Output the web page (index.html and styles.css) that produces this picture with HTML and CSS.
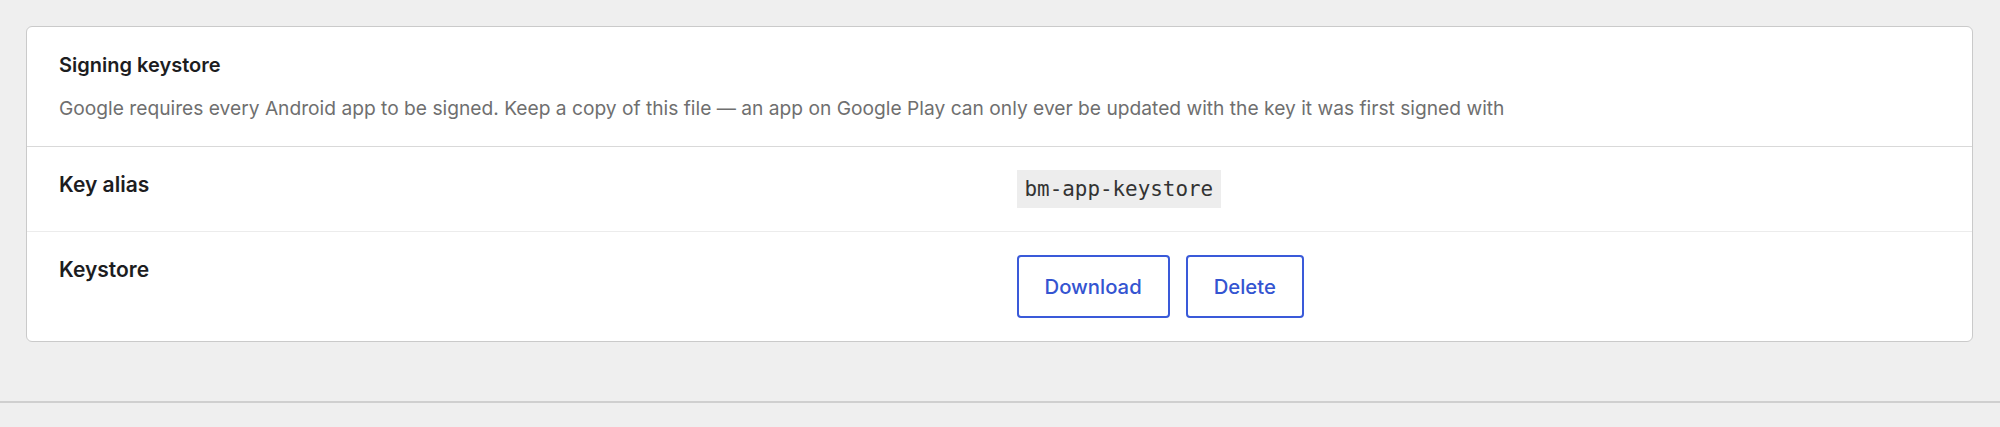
FILE: index.html
```html
<!DOCTYPE html>
<html lang="en">
<head>
    <meta charset="UTF-8">
    <meta name="viewport" content="width=device-width, initial-scale=1.0">
    <title>Signing keystore</title>
    <link rel="stylesheet" href="styles.css">
</head>
<body>
    <div class="page">
        <div class="card">
            <div class="card-header">
                <h2>Signing keystore</h2>
                <p class="hint">Google requires every Android app to be signed. Keep a copy of this file — an app on Google Play can only ever be updated with the key it was first signed with</p>
            </div>
            <div class="row">
                <div class="row-label">Key alias</div>
                <div class="row-value">
                    <code>bm-app-keystore</code>
                </div>
            </div>
            <div class="row">
                <div class="row-label">Keystore</div>
                <div class="row-value actions">
                    <button class="btn-outline">Download</button>
                    <button class="btn-outline">Delete</button>
                </div>
            </div>
        </div>
    </div>
    <div class="page-footer"></div>
</body>
</html>
```

FILE: styles.css
```css
body {
    margin: 0;
    background-color: #efefef;
    font-family: Inter, "Noto Sans", sans-serif;
    color: #1d1d1f;
}
.page {
    padding: 26px 27px 0 26px;
}
.card {
    background-color: #fff;
    border: 1px solid #cacaca;
    border-radius: 6px;
}
.card-header {
    padding: 24px 32px 26px;
    border-bottom: 1px solid #d9d9d9;
}
.card-header h2 {
    margin: 0;
    font-size: 20px;
    line-height: 28px;
    font-weight: 600;
}
.hint {
    margin: 17px 0 0;
    font-size: 19.2px;
    line-height: 24px;
    color: #6f6f6f;
}
.row {
    display: grid;
    grid-template-columns: 1fr 1fr;
    column-gap: 34px;
    padding: 23px 32px;
}
.row + .row {
    border-top: 1px solid #ececec;
}
.row-label {
    font-size: 21px;
    line-height: 30px;
    font-weight: 600;
}
.row-value code {
    display: inline-block;
    font-family: "DejaVu Sans Mono", monospace;
    font-size: 20.9px;
    line-height: 26px;
    padding: 6px 8px;
    background-color: #ededed;
    color: #333;
}
.actions {
    display: flex;
    gap: 16px;
}
.btn-outline {
    font-family: inherit;
    font-size: 20.3px;
    line-height: 27px;
    font-weight: 500;
    color: #3454d1;
    background-color: #fff;
    border: 2px solid #3a5ad9;
    border-radius: 4px;
    padding: 16px 26px;
    cursor: pointer;
}
.btn-outline:hover {
    background-color: #f3f5fd;
}
.page-footer {
    margin-top: 59px;
    border-top: 2px solid #cfcfcf;
    height: 30px;
}
```
